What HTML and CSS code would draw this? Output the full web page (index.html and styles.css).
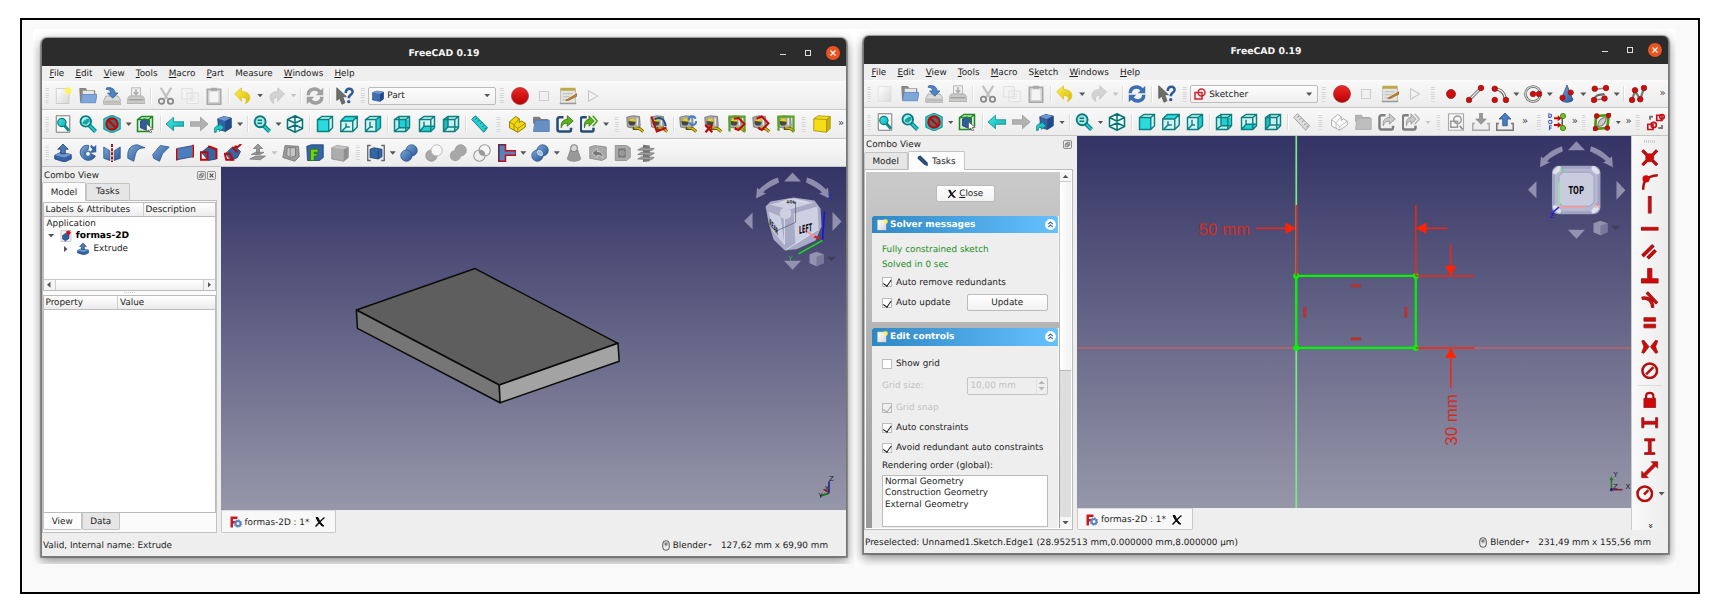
FILE: index.html
```html
<!DOCTYPE html>
<html lang="en">
<head>
<meta charset="utf-8">
<title>FreeCAD 0.19</title>
<link rel="stylesheet" href="styles.css">
</head>
<body>
<svg class="sprite" width="0" height="0">
<defs>
<linearGradient id="gb" x1="0" y1="0" x2="1" y2="1"><stop offset="0" stop-color="#7ba6d8"/><stop offset="1" stop-color="#2a5797"/></linearGradient>
<linearGradient id="gt" x1="0" y1="0" x2="1" y2="1"><stop offset="0" stop-color="#3ee8e8"/><stop offset="1" stop-color="#12b0b2"/></linearGradient>
<linearGradient id="gr" x1="0" y1="0" x2="0" y2="1"><stop offset="0" stop-color="#ef2929"/><stop offset="1" stop-color="#b80000"/></linearGradient>
<linearGradient id="gy" x1="0" y1="0" x2="1" y2="1"><stop offset="0" stop-color="#fdf04f"/><stop offset="1" stop-color="#d9b700"/></linearGradient>
<linearGradient id="gp" x1="0" y1="0" x2="1" y2="1"><stop offset="0" stop-color="#fff"/><stop offset="1" stop-color="#d8d8d8"/></linearGradient>
<radialGradient id="glow"><stop offset="0" stop-color="#fff94a"/><stop offset=".5" stop-color="#fff25a"/><stop offset="1" stop-color="#fff46b" stop-opacity="0"/></radialGradient>
</defs>
<symbol id="new" viewBox="0 0 24 24"><path d="M3 2h17v20H3z" fill="url(#gp)" stroke="#c4c4c4"/><circle cx="19" cy="5" r="6" fill="url(#glow)"/></symbol>
<symbol id="newdis" viewBox="0 0 24 24"><path d="M3 2h17v20H3z" fill="url(#gp)" stroke="#ddd"/></symbol>
<symbol id="open" viewBox="0 0 24 24"><path d="M1 2h8l2 3h10v5H4v9H2z" fill="#8b8b89" stroke="#6d6d6b"/><path d="M5 5h15v6H5z" fill="#e6e6e6"/><path d="M4 10h20l-2 11H2z" fill="#7ea7d9" stroke="#5583bf"/></symbol>
<symbol id="save" viewBox="0 0 24 24"><path d="M4 12h16l4 6v5H1v-5z" fill="#dcdcda" stroke="#9a9a98"/><path d="M2 18h21v4H2z" fill="#bcbcba"/><path d="M5 1c7-1 11 2 11 7h4l-7 7-7-7h4c0-3-2-5-6-5z" fill="#4f83c4" stroke="#2c5c9a"/></symbol>
<symbol id="print" viewBox="0 0 24 24"><path d="M6 1h12v11H6z" fill="#eee" stroke="#aaa"/><path d="M12 3v7m-3-3l3 3 3-3" stroke="#aaa" stroke-width="2" fill="none"/><path d="M3 12h18l3 5v5H0v-5z" fill="#c9c9c8" stroke="#a8a8a7"/><path d="M2 17h20" stroke="#a2a2a2" stroke-width="2"/></symbol>
<symbol id="cut" viewBox="0 0 24 24"><path d="M5 1l9 15M19 1l-9 15" stroke="#c0c0c0" stroke-width="3"/><circle cx="6" cy="19" r="3.600" fill="none" stroke="#8a8a8a" stroke-width="2.400"/><circle cx="18" cy="19" r="3.600" fill="none" stroke="#8a8a8a" stroke-width="2.400"/></symbol>
<symbol id="copy" viewBox="0 0 24 24"><path d="M1 2h14v14H1zM8 8h15v14H8z" fill="#f3f3f3" stroke="#dadada"/><path d="M11 12h9M11 15h9M11 18h7" stroke="#ddd"/></symbol>
<symbol id="paste" viewBox="0 0 24 24"><path d="M3 3h18v20H3z" fill="#d0d0cf" stroke="#a8a8a7" stroke-width="2"/><path d="M6 6h12v14H6z" fill="#f4f4f4"/><path d="M8 1h8v4H8z" fill="#a9a9a8"/></symbol>
<symbol id="undo" viewBox="0 0 24 24"><path d="M1 9l9-8v5c9 0 12 5 11 10-1 3-3 5-6 6 3-5 1-8-5-8v5z" fill="url(#gy)" stroke="#e0c22a"/></symbol>
<symbol id="redo" viewBox="0 0 24 24"><path d="M22 9l-9-8v5C4 6 2 11 3 16c1 3 3 5 5 6-2-5 0-8 5-8v5z" fill="#d2d2d2" stroke="#c4c4c4"/></symbol>
<symbol id="refresh" viewBox="0 0 24 24"><path d="M3 11C3 2 14 0 19 7M21 13c0 9-11 11-16 4" fill="none" stroke="#3e6fb0" stroke-width="4.600"/><path d="M23 1v10H13zM1 23V13h10z" fill="#3e6fb0"/></symbol>
<symbol id="whats" viewBox="0 0 24 24"><path d="M1 1l13 12H9l3 8-4 2-3-8-4 3z" fill="#6a6d68" stroke="#555753"/><path d="M13 8c0-8 10-7 9-1-1 4-5 3-5 8" fill="none" stroke="#2f5a94" stroke-width="3.400"/><circle cx="17" cy="19.500" r="2.200" fill="#2f5a94"/></symbol>
<symbol id="rec" viewBox="0 0 24 24"><circle cx="12" cy="12" r="11.300" fill="url(#gr)" stroke="#9a3030"/></symbol>
<symbol id="stop" viewBox="0 0 24 24"><path d="M6 6h12v12H6z" fill="#f1f1f1" stroke="#cfcfcf" stroke-width="1.500"/></symbol>
<symbol id="edit" viewBox="0 0 24 24"><path d="M2 3h20v19H2z" fill="#e4e4df" stroke="#b5b5ad"/><path d="M2 1h20v4H2z" fill="#bba94a"/><path d="M5 9h13M5 13h9M5 17h10" stroke="#bbb" stroke-width="1.500"/><path d="M24 9l-12 7-3 2 4-.5L24 12z" fill="#e08a1e" stroke="#8a5a22"/><path d="M1 22h22" stroke="#999" stroke-width="2"/></symbol>
<symbol id="play" viewBox="0 0 24 24"><path d="M6 5l12 7-12 7z" fill="#f3f3f3" stroke="#c9c9c9" stroke-width="1.500"/></symbol>
<symbol id="fit" viewBox="0 0 24 24"><path d="M3 1h18v22H3z" fill="#fafafa" stroke="#777" stroke-width="1.300"/><path d="M13 13l7 8" stroke="#0d8c8e" stroke-width="4"/><circle cx="10.500" cy="10" r="5.500" fill="url(#gt)" stroke="#067c7e" stroke-width="1.600"/></symbol>
<symbol id="fitsel" viewBox="0 0 24 24"><path d="M13 13l9 9" stroke="#067c7e" stroke-width="5.500"/><path d="M13 13l9 9" stroke="#1fc6c8" stroke-width="3"/><circle cx="9" cy="8.500" r="7" fill="#b0eeee" stroke="#067c7e" stroke-width="2.500"/><path d="M5 12V9l5-4h4v4l-4 4z" fill="#15a6a8"/></symbol>
<symbol id="dstyle" viewBox="0 0 24 24"><path d="M12 0l11 5v14l-11 5L1 19V5z" fill="#1dc9cb" stroke="#07797b"/><circle cx="12" cy="12" r="7.500" fill="#58676a" stroke="#c00808" stroke-width="3"/><path d="M7 7l10 10" stroke="#c00808" stroke-width="3"/></symbol>
<symbol id="bbox" viewBox="0 0 24 24"><path d="M2 6l6-4h14v15l-5 5H2z" fill="#dfe8df"/><path d="M6 8l5-3 7 2v9l-5 4-7-3z" fill="#315c9b" stroke="#173766"/><path d="M2 6l6-4h14v15l-5 5H2zM2 6h15v16M17 6l5-4" fill="none" stroke="#1b8a1f" stroke-width="2"/><path d="M14 12l9 7-4 .4 2 3.600-2 1-2-4-3 2z" fill="#fff" stroke="#555"/></symbol>
<symbol id="left" viewBox="0 0 24 24"><path d="M0 12l10-9v6h14v6H10v6z" fill="url(#gt)" stroke="#0b8284"/></symbol>
<symbol id="right" viewBox="0 0 24 24"><path d="M24 12L14 3v6H0v6h14v6z" fill="#b2b2b2" stroke="#9b9b9b"/></symbol>
<symbol id="link" viewBox="0 0 24 24"><path d="M5 5l8-3 10 2v13l-8 5-9-3z" fill="#3363a6" stroke="#183a6c"/><path d="M5 5l8-3 10 2-8 4z" fill="#6e98cf"/><path d="M15 8l8-4v13l-8 5z" fill="#214a86"/><path d="M0 23c0-6 2-9 7-9v-3l6 6-6 5v-3c-3 0-4 1-4 4z" fill="#23c5c7" stroke="#067c7e"/></symbol>
<symbol id="zoom" viewBox="0 0 24 24"><path d="M14 14l8 8" stroke="#067c7e" stroke-width="5.500"/><path d="M14 14l8 8" stroke="#1fc6c8" stroke-width="3"/><circle cx="9.500" cy="9" r="7.300" fill="#a8e6e6" stroke="#067c7e" stroke-width="2.500"/><path d="M6 7h6M6 11h6" stroke="#067c7e" stroke-width="1.800"/></symbol>
<symbol id="axo" viewBox="0 0 24 24"><path d="M12 1l10 5v12l-10 5-10-5V6zM2 6l10 5 10-5M12 11v12M12 1v10M2 18l10-5 10 5" fill="#e8fafa" stroke="#087173" stroke-width="2"/></symbol>
<symbol id="front" viewBox="0 0 24 24"><path d="M2 6l6-4h14v15l-5 5H2z" fill="#d4f4f4"/><path d="M2 6h15v16H2z" fill="#29dbdd"/><path d="M2 6l6-4h14v15l-5 5H2zM2 6h15v16M17 6l5-4" fill="none" stroke="#0c7f81" stroke-width="1.900"/></symbol>
<symbol id="top" viewBox="0 0 24 24"><path d="M1 8l6-6h16v14l-6 6H1z" fill="#d4f4f4"/><path d="M1 8l6-6h16l-6 6z" fill="#29dbdd"/><path d="M1 8l6-6h16v14l-6 6H1zM1 8h16v14M17 8l6-6M8 11v5h5M8 16l-5 5" fill="none" stroke="#0c7f81" stroke-width="1.900"/></symbol>
<symbol id="rgt" viewBox="0 0 24 24"><path d="M2 6l6-4h14v15l-5 5H2z" fill="#d4f4f4"/><path d="M16 6l6-4v15l-6 5z" fill="#1fd0d2"/><path d="M2 6l6-4h14v15l-6 5H2zM2 6h14v16M16 6l6-4M8 9v7h4M8 16l-5 5" fill="none" stroke="#0c7f81" stroke-width="1.900"/></symbol>
<symbol id="rear" viewBox="0 0 24 24"><path d="M2 6l6-4h14v15l-5 5H2z" fill="#b9eeee"/><path d="M8 6h13v11H8z" fill="#1fd0d2"/><path d="M2 6l6-4h14v15l-5 5H2zM2 6h15v16M17 6l5-4M8 3v14h13M8 17l-5 4" fill="none" stroke="#0c7f81" stroke-width="1.900"/></symbol>
<symbol id="bottom" viewBox="0 0 24 24"><path d="M2 6l6-4h14v15l-5 5H2z" fill="#d4f4f4"/><path d="M3 22l5-7h14l-5 7z" fill="#1fd0d2"/><path d="M2 6l6-4h14v15l-5 5H2zM2 6h15v16M17 6l5-4M8 9v6h13M8 15l-5 6" fill="none" stroke="#0c7f81" stroke-width="1.900"/></symbol>
<symbol id="lft" viewBox="0 0 24 24"><path d="M2 6l6-4h14v15l-5 5H2z" fill="#c4f0f0"/><path d="M2 6l6-3v13l-6 6z" fill="#1fb9bb"/><path d="M2 6l6-4h14v15l-5 5H2zM2 6h15v16M17 6l5-4M8 3v13h13M8 16l-5 5" fill="none" stroke="#0c7f81" stroke-width="1.900"/></symbol>
<symbol id="ruler" viewBox="0 0 24 24"><path d="M6 1L1 6l16 17 5-6z" fill="#24cfd1" stroke="#0b8284" stroke-width="1.300"/><path d="M8 4L6 6m5 1L9 9m5 1l-2 2m5 2l-2 2m5 1l-2 2" stroke="#066" stroke-width="1.300"/></symbol>
<symbol id="part" viewBox="0 0 24 24"><path d="M2 9l8-7 5 3v5l3-2 5 3v5l-10 7-11-6z" fill="#f3d80e" stroke="#8f7d05" stroke-width="1.300"/><path d="M2 9l6 4 7-8M8 13v7M8 14l5 4 10-7M13 18v5" stroke="#8f7d05" fill="none"/></symbol>
<symbol id="group" viewBox="0 0 24 24"><path d="M2 3h8l2 3h9v5H2z" fill="#7f7f7e" stroke="#6a6a69"/><path d="M4 7h19v15H2z" fill="#668fc7" stroke="#5178ab"/></symbol>
<symbol id="mlink" viewBox="0 0 24 24"><path d="M10 3H5c-2 0-3 1-3 3v13c0 2 1 3 3 3h13c2 0 2-1 2-3v-2" fill="none" stroke="#294c77" stroke-width="3.400"/><path d="M7 17C6 9 10 6 15 6V1l8 7-8 7v-4c-4 0-6 1-8 6z" fill="#5cb31a" stroke="#2c6a07"/></symbol>
<symbol id="mlinks" viewBox="0 0 24 24"><path d="M9 3H4C2 3 1 4 1 6v13c0 2 1 3 3 3h12c2 0 2-1 2-3v-2" fill="none" stroke="#294c77" stroke-width="3.400"/><path d="M6 17C5 9 8 6 12 6V1l7 7-7 7v-4c-3 0-5 1-6 6z" fill="#5cb31a" stroke="#2c6a07"/><path d="M17 1l6 7-6 7" fill="none" stroke="#4a9a14" stroke-width="2"/></symbol>
<symbol id="tape" viewBox="0 0 24 24"><path d="M1 3l8-2 9 1 1 13-7 3-10-2z" fill="#a9aaa7" stroke="#696a68"/><circle cx="8" cy="9.500" r="4.600" fill="#454746"/><path d="M4 8c1-5 8-5 9 1z" fill="#e8d21c"/><path d="M15 4v10" stroke="#e6e6e6" stroke-width="2"/><path d="M9 18l9 0 5 4" stroke="#5a5412" stroke-width="4" fill="none"/><path d="M11 17l7 1 5 4" stroke="#d8b800" stroke-width="2.200" fill="none"/></symbol>
<symbol id="tapeang" viewBox="0 0 24 24"><use href="#tape"/><path d="M2 2l7 20 13-5" fill="none" stroke="#c00808" stroke-width="2.600"/><path d="M6 6c8-5 14 0 15 9" fill="none" stroke="#1b4a8c" stroke-width="2.400"/></symbol>
<symbol id="taperef" viewBox="0 0 24 24"><use href="#tape"/><path d="M13 7c0-6 7-7 9-2M23 8c0 6-7 7-9 2" fill="none" stroke="#4a80c2" stroke-width="2.800"/></symbol>
<symbol id="tapedel" viewBox="0 0 24 24"><use href="#tape"/><path d="M2 13l9 10M11 13L2 23" stroke="#c00808" stroke-width="3"/></symbol>
<symbol id="tapeall" viewBox="0 0 24 24"><use href="#tape"/><path d="M2 22V2h20v20" fill="none" stroke="#5aa321" stroke-width="3"/><path d="M8 5l6-1 8 8-8 8-5-2" fill="none" stroke="#c00808" stroke-width="2.600"/></symbol>
<symbol id="tape3d" viewBox="0 0 24 24"><use href="#tape"/><path d="M6 5l7-3 9 9-9 9-5-3" fill="none" stroke="#c00808" stroke-width="2.600"/></symbol>
<symbol id="tapedelta" viewBox="0 0 24 24"><use href="#tape"/><path d="M2 21V2h20v19" fill="none" stroke="#5aa321" stroke-width="3"/></symbol>
<symbol id="ybox" viewBox="0 0 24 24"><path d="M1 5l6-4 16 1v16l-5 5-17-2z" fill="#f5de17" stroke="#9b8704"/><path d="M18 6l5-4v16l-5 5z" fill="#c9ad05"/><path d="M1 5l17 1v17M18 6l5-4" fill="none" stroke="#9b8704"/></symbol>
<symbol id="extrude" viewBox="0 0 24 24"><path d="M1 15l8-4 14 3v6l-9 4-13-4z" fill="#3363a6" stroke="#183a6c"/><path d="M1 15l8-4 14 3-9 4z" fill="#7099cf"/><path d="M12 0l7 7h-4v6H9V7H5z" fill="#4878b8" stroke="#183a6c"/></symbol>
<symbol id="revolve" viewBox="0 0 24 24"><path d="M13 2C5 0 0 8 2 14c3 9 15 11 20 2l-6-3c-2 4-7 4-8 0-1-3 1-5 4-5z" fill="url(#gb)" stroke="#2a4f82"/><path d="M15 4l3 3-4 5 9-1V1l-3 3-4-3z" fill="#3465a4"/><circle cx="12" cy="13" r="3.500" fill="#fff" stroke="#4a76b0" stroke-width="2"/></symbol>
<symbol id="mirror" viewBox="0 0 24 24"><path d="M1 4l8 5v13l-8-3zM23 4l-8 5v13l8-3z" fill="url(#gb)" stroke="#2a4f82"/><path d="M12 0v24" stroke="#b01010" stroke-width="2.600" stroke-dasharray="4 1.500"/></symbol>
<symbol id="fillet" viewBox="0 0 24 24"><path d="M1 15C1 6 6 1 14 1l10 4c-8 0-12 4-13 10l-2 8-8-4z" fill="url(#gb)" stroke="#2a4f82"/></symbol>
<symbol id="chamfer" viewBox="0 0 24 24"><path d="M1 14L11 2l12 2-9 9-4 10-8-4z" fill="url(#gb)" stroke="#2a4f82"/></symbol>
<symbol id="face" viewBox="0 0 24 24"><path d="M2 6l20-4v15L2 21z" fill="#4a7dc0"/><path d="M1 6v16M23 1v17" stroke="#c00808" stroke-width="2.400"/><path d="M1 6l22-4M1 21l22-4" stroke="#333a66"/></symbol>
<symbol id="loft" viewBox="0 0 24 24"><path d="M2 11l10-8 10 4v13l-11 2z" fill="#3465a4" stroke="#183a6c"/><path d="M1 11h9v10H1zM11 3l11 4v13" fill="none" stroke="#c00808" stroke-width="2.600"/></symbol>
<symbol id="sweep" viewBox="0 0 24 24"><path d="M2 13l8-8 6-1 6 6-4 8-8 4z" fill="#3465a4" stroke="#183a6c"/><path d="M1 13h7l4 8H3zM11 4l7 7M17 5l6-5M14 3l4 1" fill="none" stroke="#c00808" stroke-width="2.600"/></symbol>
<symbol id="offset" viewBox="0 0 24 24"><path d="M1 20l8-4h13l-7 5zM3 14l6-3h11l-5 3z" fill="#999" stroke="#777"/><path d="M12 0l6 6h-4v6h-4V6H6z" fill="#999" stroke="#777"/></symbol>
<symbol id="thick" viewBox="0 0 24 24"><path d="M4 2l18 1 1 14-6 6L1 18z" fill="#9c9c9c" stroke="#6f6f6f"/><path d="M7 5h11v11l-7 2-5-3z" fill="#c5c5c5" stroke="#6f6f6f"/><path d="M11 5v13" stroke="#777"/></symbol>
<symbol id="projf" viewBox="0 0 24 24"><path d="M1 3l6-2h16v17l-5 4H2z" fill="#3465a4" stroke="#183a6c"/><path d="M6 22V7h10v4h-5v2h4v3h-4v6z" fill="#73d216" stroke="#2f7205"/></symbol>
<symbol id="gbox" viewBox="0 0 24 24"><path d="M1 5l7-3 15 2v14l-6 5-16-3z" fill="#acacac" stroke="#8a8a8a"/><path d="M17 7l6-3v14l-6 5z" fill="#8f8f8f"/><path d="M1 5l16 2 6-3-15-2z" fill="#c2c2c2"/></symbol>
<symbol id="comp" viewBox="0 0 24 24"><path d="M5 2H1v20h4M19 2h4v20h-4" fill="none" stroke="#666" stroke-width="1.800"/><path d="M4 7l5-2 11 2v10l-5 3-11-2z" fill="#3465a4" stroke="#183a6c"/><path d="M15 9v11" stroke="#183a6c"/></symbol>
<symbol id="bool" viewBox="0 0 24 24"><circle cx="15.500" cy="8.500" r="7.500" fill="url(#gb)" stroke="#274d80"/><circle cx="8.500" cy="15.500" r="7.500" fill="url(#gb)" stroke="#274d80"/></symbol>
<symbol id="bcut" viewBox="0 0 24 24"><circle cx="8.500" cy="15.500" r="7.500" fill="#a8a8a8" stroke="#8c8c8c"/><circle cx="15.500" cy="8.500" r="7.500" fill="#f6f6f6" stroke="#aaa"/></symbol>
<symbol id="bfuse" viewBox="0 0 24 24"><circle cx="15.500" cy="8.500" r="7.500" fill="#a8a8a8" stroke="#8c8c8c"/><circle cx="8.500" cy="15.500" r="7.500" fill="#a8a8a8"/></symbol>
<symbol id="bcom" viewBox="0 0 24 24"><circle cx="15.500" cy="8.500" r="7.500" fill="#f6f6f6" stroke="#999" stroke-width="1.500"/><circle cx="8.500" cy="15.500" r="7.500" fill="#ececec" fill-opacity=".6" stroke="#999" stroke-width="1.500"/><path d="M8 9c4-2 8 2 8 6-5 2-9-2-8-6z" fill="#999"/></symbol>
<symbol id="join" viewBox="0 0 24 24"><path d="M1 1h9v8h14v6H10v8H1z" fill="#5682bd" stroke="#c40c14" stroke-width="2"/><path d="M1 1v22M1 1h9" stroke="#29446b" stroke-width="1.500"/></symbol>
<symbol id="split" viewBox="0 0 24 24"><circle cx="15.500" cy="8.500" r="7.500" fill="url(#gb)" stroke="#274d80"/><circle cx="8.500" cy="15.500" r="7.500" fill="url(#gb)" stroke="#274d80"/><path d="M9 9c5-1 7 2 6 6-5 1-7-2-6-6z" fill="#9dbce2" stroke="#fff"/></symbol>
<symbol id="check" viewBox="0 0 24 24"><path d="M7 8h10l4 12c-3 4-15 4-18 0z" fill="#999" stroke="#868686"/><circle cx="12" cy="5.500" r="4.500" fill="#d8d8d8" stroke="#888" stroke-width="1.500"/></symbol>
<symbol id="defeat" viewBox="0 0 24 24"><path d="M1 4l7-2 15 2v15l-6 3-16-3z" fill="#a8a8a8" stroke="#848484"/><path d="M4 12l7-6v4c7 0 8 5 7 9-1-3-3-4-7-4v3z" fill="#777" stroke="#ddd"/></symbol>
<symbol id="section" viewBox="0 0 24 24"><path d="M3 2h15l5 3v13l-5 4H3z" fill="#aaa" stroke="#888"/><path d="M7 6h10v12H7z" fill="#777"/><circle cx="12" cy="12" r="4" fill="#999"/></symbol>
<symbol id="cross" viewBox="0 0 24 24"><path d="M8 1l9 1v21l-9 1z" fill="#777"/><path d="M1 8l5-3 17 1-4 3zM1 14l5-3 17 1-4 3zM1 20l5-3 17 1-4 3z" fill="#a0a0a0" stroke="#777"/></symbol>
<symbol id="pcube" viewBox="0 0 24 24"><path d="M1 5l8-3 14 2v14l-7 5-15-3z" fill="#3e6eb0" stroke="#1d4176"/><path d="M16 8l7-4v14l-7 5z" fill="#204a87"/><path d="M1 5l8-3 14 2-7 4z" fill="#7099cf"/></symbol>
<symbol id="sk" viewBox="0 0 24 24"><path d="M2 9h14v13H2z" fill="none" stroke="#d3222a" stroke-width="3"/><circle cx="15" cy="9" r="7" fill="none" stroke="#d3222a" stroke-width="3"/></symbol>
<symbol id="pt" viewBox="0 0 24 24"><circle cx="12" cy="12" r="6" fill="#d40a0a" stroke="#6d2020"/></symbol>
<symbol id="line" viewBox="0 0 24 24"><path d="M4 20L20 4" stroke="#555" stroke-width="4"/><path d="M4 20L20 4" stroke="#eee" stroke-width="1.800"/><g fill="#d40a0a" stroke="#8d1515"><circle cx="4" cy="20" r="3.700"/><circle cx="20" cy="4" r="3.700"/></g></symbol>
<symbol id="arc" viewBox="0 0 24 24"><path d="M4 5c9 0 15 6 15 15" stroke="#555" stroke-width="4" fill="none"/><path d="M4 5c9 0 15 6 15 15" stroke="#eee" stroke-width="1.800" fill="none"/><g fill="#d40a0a" stroke="#8d1515"><circle cx="5" cy="5" r="3.700"/><circle cx="5" cy="20" r="3.700"/><circle cx="20" cy="20" r="3.700"/></g></symbol>
<symbol id="circ" viewBox="0 0 24 24"><circle cx="12" cy="12" r="10" fill="#f5f5f5" stroke="#666" stroke-width="3.500"/><circle cx="12" cy="12" r="10" fill="none" stroke="#ddd" stroke-width="1.500"/><g fill="#d40a0a" stroke="#8d1515"><circle cx="12" cy="12" r="3.700"/><circle cx="20" cy="12" r="3.700"/></g></symbol>
<symbol id="cone" viewBox="0 0 24 24"><path d="M12 0l8 20c-3 4-13 4-16 0z" fill="url(#gb)" stroke="#274d80"/><g fill="#d40a0a" stroke="#8d1515"><circle cx="6" cy="17" r="3.500"/><circle cx="17" cy="10" r="3.500"/></g></symbol>
<symbol id="bsp" viewBox="0 0 24 24"><path d="M4 20c3-9 8-6 14-8" stroke="#666" stroke-width="3" fill="none"/><path d="M5 6l14-2M5 20l15-2" stroke="#888" stroke-width="2"/><g fill="#d40a0a" stroke="#8d1515"><circle cx="5" cy="5" r="3.700"/><circle cx="4" cy="20" r="3.700"/><circle cx="20" cy="4" r="3.700"/><circle cx="18" cy="18" r="3.700"/></g></symbol>
<symbol id="poly" viewBox="0 0 24 24"><path d="M4 20L8 8l7 11 5-15" stroke="#777" stroke-width="3" fill="none"/><g fill="#d40a0a" stroke="#8d1515"><circle cx="4" cy="20" r="3.700"/><circle cx="8" cy="7" r="3.700"/><circle cx="15" cy="19" r="3.700"/><circle cx="20" cy="4" r="3.700"/></g></symbol>
<symbol id="skg" viewBox="0 0 24 24"><path d="M2 1h20v22H2z" fill="#f5f5f5" stroke="#aaa" stroke-width="1.500"/><path d="M5 11h9v8H5z" fill="none" stroke="#999" stroke-width="2"/><circle cx="14" cy="9" r="5" fill="none" stroke="#999" stroke-width="2"/><path d="M17 17l4 5" stroke="#888" stroke-width="2"/></symbol>
<symbol id="down" viewBox="0 0 24 24"><path d="M4 14H1v9h22v-9h-3" fill="#eee" stroke="#aaa" stroke-width="2"/><path d="M12 15L5 8h5V0h4v8h5z" fill="#9a9a9a" stroke="#888"/></symbol>
<symbol id="up" viewBox="0 0 24 24"><path d="M4 14H1v9h22v-9h-3" fill="#eee" stroke="#777" stroke-width="2"/><path d="M12 0l8 8h-5v9H9V8H4z" fill="#4a7ec4" stroke="#24497e"/></symbol>
<symbol id="dof" viewBox="0 0 24 24"><g fill="none" stroke="#3b4fc4" stroke-width="1.400"><path d="M1 1v5c5 0 5-5 0-5"/><circle cx="3" cy="12" r="2.300"/><path d="M2 23v-6h3M2 20h3"/></g><path d="M19 5v14" stroke="#555" stroke-width="2"/><path d="M8 7h7M8 16h7" stroke="#c00" stroke-width="2.600"/><path d="M13 3l5 4-5 4zM13 12l5 4-5 4z" fill="#c00"/><circle cx="20" cy="4" r="3.500" fill="#6fc61a" stroke="#347309"/><circle cx="20" cy="20" r="3.500" fill="#6fc61a" stroke="#347309"/></symbol>
<symbol id="spline" viewBox="0 0 24 24"><path d="M4 4l17-1-2 17-16 1z" fill="#ededed" stroke="#4e9a06" stroke-width="3.600"/><path d="M6 18c1-9 5-12 12-12-1 8-5 12-12 12z" fill="#ccc" stroke="#777" stroke-width="1.500"/><g fill="#d40a0a" stroke="#8d1515"><circle cx="5" cy="4" r="3.200"/><circle cx="21" cy="3" r="3.200"/><circle cx="3" cy="21" r="3.200"/><circle cx="19" cy="20" r="3.200"/></g></symbol>
<symbol id="virt" viewBox="0 0 24 24"><g fill="none" stroke="#cc1018" stroke-width="2.200"><path d="M1 15h7v7H1zM13 3h7v7h-7z"/><circle cx="9" cy="16" r="3.500"/><circle cx="20" cy="5" r="3"/></g><path d="M4 9V5h4M20 16v4h-5" fill="none" stroke="#777" stroke-width="2.500"/></symbol>
<symbol id="c1" viewBox="0 0 24 24"><path d="M2 2l6 6M22 2l-6 6M2 22l6-6M22 22l-6-6" stroke="#8a1616" stroke-width="4.500"/><path d="M2 2l6 6M22 2l-6 6M2 22l6-6M22 22l-6-6" stroke="#cf0808" stroke-width="3"/><circle cx="12" cy="12" r="5.500" fill="#d40808" stroke="#8a1616"/></symbol>
<symbol id="c2" viewBox="0 0 24 24"><path d="M3 23C3 10 8 4 23 3" fill="none" stroke="#b00f0f" stroke-width="3.500"/><circle cx="7" cy="8" r="5" fill="#d40808"/></symbol>
<symbol id="c3" viewBox="0 0 24 24"><path d="M10 0h4v24h-4z" fill="#d00808" stroke="#8a1616"/></symbol>
<symbol id="c4" viewBox="0 0 24 24"><path d="M0 10h24v4H0z" fill="#d00808" stroke="#8a1616"/></symbol>
<symbol id="c5" viewBox="0 0 24 24"><path d="M2 18L17 3M9 21L20 10" stroke="#8a1616" stroke-width="5"/><path d="M3 17L16 4M10 20l9-9" stroke="#d00808" stroke-width="3.500"/></symbol>
<symbol id="c6" viewBox="0 0 24 24"><path d="M9 2h6v14h9v6H0v-6h9z" fill="#d00808" stroke="#8a1616"/></symbol>
<symbol id="c7" viewBox="0 0 24 24"><path d="M1 10c9-2 15 4 15 13M8 2l14 15" fill="none" stroke="#8a1616" stroke-width="4.500"/><path d="M1 10c9-2 15 4 15 13M8 2l14 15" fill="none" stroke="#cc1010" stroke-width="3"/></symbol>
<symbol id="c8" viewBox="0 0 24 24"><path d="M4 5h16v5H4zM4 14h16v5H4z" fill="#d00808" stroke="#8a1616"/></symbol>
<symbol id="c9" viewBox="0 0 24 24"><path d="M1 4l3-1 7 9-7 9-3-1 3-8zM23 4l-3-1-7 9 7 9 3-1-3-8z" fill="#d00808" stroke="#8a1616"/></symbol>
<symbol id="c10" viewBox="0 0 24 24"><circle cx="12" cy="12" r="10" fill="none" stroke="#b50e0e" stroke-width="3.500"/><path d="M7 17L17 7" stroke="#b50e0e" stroke-width="3.500"/></symbol>
<symbol id="c11" viewBox="0 0 24 24"><path d="M7 11V7c0-6 10-6 10 0v4" fill="none" stroke="#b50e0e" stroke-width="3"/><path d="M4 10h16v13H4z" fill="#cc0a0a" stroke="#8a1616"/></symbol>
<symbol id="c12" viewBox="0 0 24 24"><path d="M1 5h3v5h16V5h3v14h-3v-5H4v5H1z" fill="#d00808" stroke="#8a1616"/></symbol>
<symbol id="c13" viewBox="0 0 24 24"><path d="M5 1h14v3h-5v16h5v3H5v-3h5V4H5z" fill="#d00808" stroke="#8a1616"/></symbol>
<symbol id="c14" viewBox="0 0 24 24"><path d="M23 1v9l-3-3L7 20l3 3H1v-9l3 3L17 4l-3-3z" fill="#d00808" stroke="#8a1616"/></symbol>
<symbol id="c15" viewBox="0 0 24 24"><circle cx="12" cy="12" r="10" fill="none" stroke="#b50e0e" stroke-width="3.500"/><path d="M11 13l6-6" stroke="#b50e0e" stroke-width="3.500"/></symbol>
<symbol id="pencil" viewBox="0 0 24 24"><path d="M2 3l5-2 14 14 1 7-7-2L1 7z" fill="#24466f"/><path d="M5 4l12 14" stroke="#547db0"/></symbol>
<symbol id="fc" viewBox="0 0 24 24"><path d="M1 1h14v5H6v4h6v5H6v8H1z" fill="#cb1820"/><circle cx="16" cy="15" r="5" fill="none" stroke="#5a82bd" stroke-width="4"/><circle cx="16" cy="15" r="7.500" fill="none" stroke="#5a82bd" stroke-width="2" stroke-dasharray="3 2.800"/></symbol>
<symbol id="x" viewBox="0 0 24 24"><path d="M3 21C8 17 13 9 21 3" stroke="#111" stroke-width="3" fill="none"/><path d="M4 3h4c3 8 7 13 12 17h-4C11 16 7 10 4 3z" fill="#111" stroke="#111" stroke-width="2"/></symbol>
<symbol id="doc" viewBox="0 0 24 24"><path d="M2 1h20v22H2z" fill="#f5f5f5" stroke="#999"/><path d="M5 11l7-5 6 4v7l-7 5-6-4z" fill="#2f5c9c" stroke="#173766"/><path d="M12 3l6-2 4 4-4 6-5-4z" fill="#cc1018"/></symbol>
<symbol id="float" viewBox="0 0 12 12"><rect x=".6" y=".6" width="10.800" height="10.800" rx="2" fill="#eee" stroke="#777" stroke-width="1.100"/><path d="M5 3h4v4H5zM3 5h4v4H3z" fill="none" stroke="#666"/></symbol>
<symbol id="close" viewBox="0 0 12 12"><rect x=".6" y=".6" width="10.800" height="10.800" rx="2" fill="#eee" stroke="#777" stroke-width="1.100"/><path d="M3.500 3.500l5 5m0-5l-5 5" stroke="#555" stroke-width="1.800"/></symbol>
<symbol id="mouse" viewBox="0 0 16 22"><rect x="1.500" y="1.500" width="13" height="19" rx="6" fill="none" stroke="#444" stroke-width="1.800"/><path d="M8 5v5" fill="none" stroke="#333" stroke-width="2.400"/><path d="M4 3c0 5 1 8 4 9 3-1 4-4 4-9" fill="none" stroke="#666" stroke-width="1.200"/></symbol>
<symbol id="dblup" viewBox="0 0 12 12"><circle cx="6" cy="6" r="5.900" fill="#fff"/><path d="M3.500 5.700L6 3.300l2.500 2.400M3.500 8.800L6 6.400l2.500 2.400" fill="none" stroke="#2a6a9d" stroke-width="1.100"/></symbol>
<symbol id="navarrows" viewBox="0 0 98 98"><g fill="#a9aac4" fill-opacity=".75"><path d="M40 9h17L48.500 0zM0 48.500L8.500 40v17zM88.500 39.500v19l9-9.500zM40 88.500h17l-8.500 9z"/><path d="M34 5l1 5C28 13 22 17 19 20l3 1-10 5 1-11 2 2C21 11 27 7 34 5zM63 5l-1 5c7 3 13 7 16 10l-3 1 10 5-1-11-2 2C76 11 70 7 63 5z"/><path d="M65.500 82l7-2.500 7 2.500v9l-7 3-7-3z"/></g><path d="M72.500 84.500l7-2.500v9l-7 3z" fill="#77789a"/><path d="M83 84.500h9l-4.500 4.500z" fill="#3f3f55"/></symbol>
</svg>

<main class="frame">
<div class="shot shot-a">
<section class="win win-a">
  <header class="title"><span class="name">FreeCAD 0.19</span><span class="wb"><i class="min"></i><i class="max"></i><svg class="wclose" viewBox="0 0 14 14"><circle cx="7" cy="7" r="7" fill="#e95420"/><path d="M4.500 4.500l5 5m0-5l-5 5" stroke="#fff" stroke-width="1.100"/></svg></span></header>
  <nav class="menu"><span><u>F</u>ile</span><span><u>E</u>dit</span><span><u>V</u>iew</span><span><u>T</u>ools</span><span><u>M</u>acro</span><span><u>P</u>art</span><span>Measure</span><span><u>W</u>indows</span><span><u>H</u>elp</span></nav>
  <div class="tb">
    <i class="h h0"></i><svg><use href="#new"/></svg><svg><use href="#open"/></svg><svg><use href="#save"/></svg><svg><use href="#print"/></svg><i class="s"></i><svg><use href="#cut"/></svg><svg><use href="#copy"/></svg><svg><use href="#paste"/></svg><i class="s"></i><svg><use href="#undo"/></svg><b class="a"></b><svg><use href="#redo"/></svg><b class="a off"></b><i class="s"></i><svg class="dis"><use href="#refresh"/></svg><i class="s"></i><svg><use href="#whats"/></svg><i class="h"></i><div class="combo"><svg><use href="#pcube"/></svg><span>Part</span><b class="a"></b></div><i class="h"></i><svg><use href="#rec"/></svg><svg><use href="#stop"/></svg><svg><use href="#edit"/></svg><svg><use href="#play"/></svg>
  </div>
  <div class="tb">
    <i class="h h0"></i><svg><use href="#fit"/></svg><svg><use href="#fitsel"/></svg><svg><use href="#dstyle"/></svg><b class="a"></b><svg><use href="#bbox"/></svg><i class="s"></i><svg><use href="#left"/></svg><svg><use href="#right"/></svg><svg><use href="#link"/></svg><b class="a"></b><i class="s"></i><svg><use href="#zoom"/></svg><b class="a"></b><svg><use href="#axo"/></svg><i class="s"></i><svg><use href="#front"/></svg><svg><use href="#top"/></svg><svg><use href="#rgt"/></svg><i class="s"></i><svg><use href="#rear"/></svg><svg><use href="#bottom"/></svg><svg><use href="#lft"/></svg><i class="s"></i><svg><use href="#ruler"/></svg><i class="h"></i><svg><use href="#part"/></svg><svg><use href="#group"/></svg><svg><use href="#mlink"/></svg><svg><use href="#mlinks"/></svg><b class="a"></b><i class="h"></i><svg><use href="#tape"/></svg><svg><use href="#tapeang"/></svg><i class="s"></i><svg><use href="#taperef"/></svg><svg><use href="#tapedel"/></svg><svg><use href="#tapeall"/></svg><svg><use href="#tape3d"/></svg><svg><use href="#tapedelta"/></svg><i class="h"></i><svg><use href="#ybox"/></svg><span class="more">»</span>
  </div>
  <div class="tb">
    <i class="h h0"></i><svg><use href="#extrude"/></svg><svg><use href="#revolve"/></svg><svg><use href="#mirror"/></svg><svg><use href="#fillet"/></svg><svg><use href="#chamfer"/></svg><svg><use href="#face"/></svg><svg><use href="#loft"/></svg><svg><use href="#sweep"/></svg><svg><use href="#offset"/></svg><b class="a off"></b><svg><use href="#thick"/></svg><svg><use href="#projf"/></svg><svg><use href="#gbox"/></svg><i class="h"></i><svg><use href="#comp"/></svg><b class="a"></b><svg><use href="#bool"/></svg><svg><use href="#bcut"/></svg><svg><use href="#bfuse"/></svg><svg><use href="#bcom"/></svg><svg><use href="#join"/></svg><b class="a"></b><svg><use href="#split"/></svg><b class="a"></b><svg><use href="#check"/></svg><svg><use href="#defeat"/></svg><svg><use href="#section"/></svg><svg><use href="#cross"/></svg>
  </div>
  <div class="main">
    <aside class="dock">
      <div class="dtitle"><span>Combo View</span><svg><use href="#float"/></svg><svg><use href="#close"/></svg></div>
      <div class="tabs"><span class="tab on w44">Model</span><span class="tab w43">Tasks</span></div>
      <div class="page">
        <div class="tree">
          <div class="th"><span class="c1">Labels &amp; Attributes</span><span>Description</span></div>
          <div class="tr r1">Application</div>
          <div class="tr r2"><b class="a"></b><svg><use href="#doc"/></svg><strong>formas-2D</strong></div>
          <div class="tr r3"><b class="ar"></b><svg><use href="#extrude"/></svg><span>Extrude</span></div>
          <div class="hscroll"><b class="al"></b><i></i><b class="ar"></b></div>
        </div>
        <div class="split"></div>
        <div class="props"><div class="th"><span class="c2">Property</span><span>Value</span></div></div>
        <div class="btabs"><span class="btab on">View</span><span class="btab">Data</span></div>
      </div>
    </aside>
    <div class="center">
      <svg class="view" viewBox="221 167.700 626 343">
        <g stroke="#0c0c0c" stroke-width="1.500" stroke-linejoin="round"><path d="M475.300 269.200L618.300 344l-118.800 41.700-143-75z" fill="#5e5e5e"/><path d="M356.500 310.700l143 75 .8 17.800L357.500 329z" fill="#767676"/><path d="M499.500 385.700L618.300 344l1.200 18-119.200 41.500z" fill="#a3a3a3"/></g>
        <use href="#navarrows" x="744.500" y="173" width="98" height="98"/>
        <path d="M766 207l5-5 23-4 21 3 6 8 1 18-6 14-19 9-12 1-11-11-5-17z" fill="#a7abc6"/>
        <path d="M770 205l25-6 19 4-24 7zM769 212l12 5 4 29-12-15zM794 214l24-7 1 23-23 15z" fill="#cdd0e2"/>
        <path d="M781 203l8-3 19 3M785 214v31M786 251l10-7 23-14" fill="none" stroke="#e1e3ef" stroke-width=".8"/>
        <circle cx="786" cy="214" r="5.800" fill="#ced1e2"/>
        <path d="M796 202v21l-20 9" stroke="#555a7a" stroke-width=".7" fill="none"/>
        <path d="M802 229l13 8" stroke="#ff8a92" stroke-width="1.600"/><path d="M814 238l2-2 7 4.500z" fill="#f01414"/>
        <path d="M825 212l-2 29" stroke="#1212ee" stroke-width="1.500"/><path d="M799 254.500l24-13.500" stroke="#12e412" stroke-width="1.500"/>
        <text class="cube" transform="matrix(1 -.22 0 1 799.500 234.500)" font-size="11" textLength="13" lengthAdjust="spacingAndGlyphs">LEFT</text><text class="cube" transform="matrix(.7 .95 0 1 770 225)" font-size="9" textLength="12" lengthAdjust="spacingAndGlyphs">REAR</text><text class="cube" transform="matrix(1 .1 0 -.5 787 200.500)" font-size="8" textLength="9" lengthAdjust="spacingAndGlyphs">TOP</text>
        <text class="ax" x="828" y="200" fill="#2323dd">Z</text><text class="ax" x="789" y="261.500" fill="#12cc22">Y</text>
        <path d="M829.500 494v-12" stroke="#23238f" stroke-width="1.600"/><path d="M829.500 494l-9 3" stroke="#1c6b1c" stroke-width="2"/><path d="M829 493l-5-3" stroke="#8d1c24" stroke-width="1.600"/>
        <text class="axd" x="829.500" y="482">Z</text><text class="axd" x="819" y="499">Y</text><text class="axd" x="825" y="492">X</text>
      </svg>
      <div class="dtab"><svg><use href="#fc"/></svg><span>formas-2D : 1*</span><svg><use href="#x"/></svg></div>
    </div>
  </div>
  <footer class="status"><span class="msg">Valid, Internal name: Extrude</span><svg><use href="#mouse"/></svg><span>Blender</span><b class="a sm"></b><span class="dim">127,62 mm x 69,90 mm</span></footer>
</section>
</div>

<div class="shot shot-b">
<section class="win win-b">
  <header class="title"><span class="name">FreeCAD 0.19</span><span class="wb"><i class="min"></i><i class="max"></i><svg class="wclose" viewBox="0 0 14 14"><circle cx="7" cy="7" r="7" fill="#e95420"/><path d="M4.500 4.500l5 5m0-5l-5 5" stroke="#fff" stroke-width="1.100"/></svg></span></header>
  <nav class="menu"><span><u>F</u>ile</span><span><u>E</u>dit</span><span><u>V</u>iew</span><span><u>T</u>ools</span><span><u>M</u>acro</span><span>S<u>k</u>etch</span><span><u>W</u>indows</span><span><u>H</u>elp</span></nav>
  <div class="tb">
    <i class="h h0"></i><svg><use href="#newdis"/></svg><svg><use href="#open"/></svg><svg><use href="#save"/></svg><svg><use href="#print"/></svg><i class="s"></i><svg><use href="#cut"/></svg><svg><use href="#copy"/></svg><svg><use href="#paste"/></svg><i class="s"></i><svg><use href="#undo"/></svg><b class="a"></b><svg><use href="#redo"/></svg><b class="a off"></b><i class="s"></i><svg><use href="#refresh"/></svg><i class="s"></i><svg><use href="#whats"/></svg><i class="h"></i><div class="combo"><svg><use href="#sk"/></svg><span>Sketcher</span><b class="a"></b></div><i class="h"></i><svg><use href="#rec"/></svg><svg><use href="#stop"/></svg><svg><use href="#edit"/></svg><svg><use href="#play"/></svg><i class="h"></i><svg><use href="#pt"/></svg><svg><use href="#line"/></svg><svg><use href="#arc"/></svg><b class="a"></b><svg><use href="#circ"/></svg><b class="a"></b><svg><use href="#cone"/></svg><b class="a"></b><svg><use href="#bsp"/></svg><b class="a"></b><i class="s"></i><svg><use href="#poly"/></svg><span class="more m2">»</span>
  </div>
  <div class="tb">
    <i class="h h0"></i><svg><use href="#fit"/></svg><svg><use href="#fitsel"/></svg><svg><use href="#dstyle"/></svg><b class="a"></b><svg><use href="#bbox"/></svg><i class="s"></i><svg><use href="#left"/></svg><svg><use href="#right"/></svg><svg><use href="#link"/></svg><b class="a"></b><i class="s"></i><svg><use href="#zoom"/></svg><b class="a"></b><svg><use href="#axo"/></svg><i class="s"></i><svg><use href="#front"/></svg><svg><use href="#top"/></svg><svg><use href="#rgt"/></svg><i class="s"></i><svg><use href="#rear"/></svg><svg><use href="#bottom"/></svg><svg><use href="#lft"/></svg><i class="s"></i><svg class="dis"><use href="#ruler"/></svg><i class="h"></i><svg class="dis"><use href="#part"/></svg><svg class="dis"><use href="#group"/></svg><svg class="dis"><use href="#mlink"/></svg><svg class="dis"><use href="#mlinks"/></svg><b class="a off"></b><i class="h h2"></i><svg><use href="#skg"/></svg><svg><use href="#down"/></svg><svg><use href="#up"/></svg><span class="more m3">»</span><i class="h"></i><svg><use href="#dof"/></svg><span class="more m4">»</span><i class="h h2"></i><svg><use href="#spline"/></svg><b class="a"></b><span class="more m4">»</span><i class="h"></i><svg><use href="#virt"/></svg>
  </div>
  <div class="main">
    <aside class="dock">
      <div class="dtitle"><span>Combo View</span><svg><use href="#float"/></svg></div>
      <div class="tabs"><span class="tab w43">Model</span><span class="tab on w57"><svg><use href="#pencil"/></svg>Tasks</span></div>
      <div class="taskpage">
        <div class="scroll">
          <div class="btn closebtn"><svg><use href="#x"/></svg><span><u>C</u>lose</span></div>
          <div class="task t1">
            <div class="thead"><svg class="pg"><use href="#new"/></svg><span>Solver messages</span><svg class="up"><use href="#dblup"/></svg></div>
            <div class="row ok ra">Fully constrained sketch</div>
            <div class="row ok ra">Solved in 0 sec</div>
            <div class="row rb"><i class="cb on"></i>Auto remove redundants</div>
            <div class="row rb"><i class="cb on"></i>Auto update<span class="btn upd">Update</span></div>
          </div>
          <div class="task t2">
            <div class="thead"><svg class="pg"><use href="#new"/></svg><span>Edit controls</span><svg class="up"><use href="#dblup"/></svg></div>
            <div class="row rc"><i class="cb"></i>Show grid</div>
            <div class="row rd faded">Grid size:<span class="spin"><span>10,00 mm</span><i><b class="au"></b><b class="a"></b></i></span></div>
            <div class="row rc faded"><i class="cb on"></i>Grid snap</div>
            <div class="row re"><i class="cb on"></i>Auto constraints</div>
            <div class="row rc"><i class="cb on"></i>Avoid redundant auto constraints</div>
            <div class="row rf">Rendering order (global):</div>
            <div class="list"><div>Normal Geometry</div><div>Construction Geometry</div><div>External Geometry</div></div>
          </div>
        </div>
        <div class="vscroll"><div class="vb"><b class="au"></b></div><div class="thumb"></div><div class="vb bot"><b class="a"></b></div></div>
      </div>
    </aside>
    <div class="center">
      <svg class="view" viewBox="1077.300 136.800 553 371.500">
        <path d="M1296.300 136v373" stroke="#77ee83" stroke-width="1.700"/><path d="M1077 348.700h554" stroke="#c26069" stroke-width="1.500"/>
        <g stroke="#04f204" stroke-width="2.200" fill="none"><path d="M1296.300 276.700h119.600v72h-119.600z"/></g>
        <g fill="#04f204"><circle cx="1296.300" cy="276.700" r="3"/><circle cx="1415.900" cy="276.700" r="3"/><circle cx="1296.300" cy="348.700" r="3"/><circle cx="1415.900" cy="348.700" r="3"/></g>
        <g stroke="#ee2710" stroke-width="1.500"><path d="M1296.300 205.700v71M1415.900 205.700v71M1256 229h34M1422 229h25.500M1450.800 245.500V268M1450.800 356v32.500M1415.900 276.700h58.600M1415.900 348.700h58.600" fill="none"/></g>
        <path d="M1296 229l-10.500-5.700v11.400zM1416 229l10.500-5.700v11.400zM1450.800 276.700l-5.700-10.200h11.400zM1450.800 348.700l-5.700 10.200h11.400z" fill="#ff2400"/>
        <path d="M1351 285.300h10v2.400h-10zM1351 338.500h10v2.400h-10zM1303.600 308h2.400v10h-2.400zM1404.700 308h2.400v10h-2.400z" fill="#cc3020" stroke="#8a3a44" stroke-width=".5"/>
        <text class="dimt" x="1198.500" y="235.700">50 mm</text><text class="dimt" transform="translate(1457.500 446.500) rotate(-90)">30 mm</text>
        <use href="#navarrows" x="1528" y="142" width="98" height="98"/>
        <rect x="1552" y="166.500" width="48.500" height="48.500" rx="7" fill="#a0a4c0"/><rect x="1555" y="169.500" width="42.500" height="42.500" rx="6" fill="#b6b9d0"/><path d="M1563 173h27l4 4v26l-4 4h-27l-4-4v-26z" fill="#c9ccdf" stroke="#969bba" stroke-width=".8"/>
        <g fill="#dfe1ee"><ellipse cx="1557" cy="171" rx="5" ry="2.500" transform="rotate(-45 1557 171)"/><ellipse cx="1595.500" cy="171" rx="5" ry="2.500" transform="rotate(45 1595.500 171)"/><ellipse cx="1557" cy="210" rx="5" ry="2.500" transform="rotate(45 1557 210)"/><ellipse cx="1595.500" cy="210" rx="5" ry="2.500" transform="rotate(-45 1595.500 210)"/></g>
        <path d="M1559 207.500v-25" stroke="#8ef08e" stroke-width="1.500"/><path d="M1559 208h27" stroke="#ff9a9a" stroke-width="1.500"/><path d="M1559 208l-6 5" stroke="#2222ee" stroke-width="1.500"/>
        <text class="ax" x="1549.500" y="218.500" fill="#1111ee">Z</text><text class="ax" x="1560" y="174" fill="#58d868">Y</text><text class="ax" x="1595" y="209" fill="#ee7a85">X</text>
        <text class="cube" x="1568.500" y="195" font-size="11" textLength="15.500" lengthAdjust="spacingAndGlyphs">TOP</text>
        <path d="M1611.500 490v-11" stroke="#1c7b1c" stroke-width="1.400"/><path d="M1609.500 481l2-4 2 4z" fill="#1c7b1c"/><path d="M1611.500 490.500h11" stroke="#8d1c24" stroke-width="1.600"/><circle cx="1611.500" cy="490.500" r="1.600" fill="#2323a0"/>
        <text class="axd" x="1613.500" y="477.500">Y</text><text class="axd" x="1613" y="490">Z</text><text class="axd" x="1625.500" y="490">X</text>
      </svg>
      <div class="dtab"><svg><use href="#fc"/></svg><span>formas-2D : 1*</span><svg><use href="#x"/></svg></div>
    </div>
    <div class="vtb">
      <i class="vh"></i><svg><use href="#c1"/></svg><svg><use href="#c2"/></svg><svg><use href="#c3"/></svg><svg><use href="#c4"/></svg><svg><use href="#c5"/></svg><svg><use href="#c6"/></svg><svg><use href="#c7"/></svg><svg><use href="#c8"/></svg><svg><use href="#c9"/></svg><svg><use href="#c10"/></svg><i class="vs"></i><svg><use href="#c11"/></svg><svg><use href="#c12"/></svg><svg><use href="#c13"/></svg><svg><use href="#c14"/></svg><div class="last"><svg><use href="#c15"/></svg><b class="a"></b></div><span class="vmore">»</span>
    </div>
  </div>
  <footer class="status"><span class="msg">Preselected: Unnamed1.Sketch.Edge1 (28.952513 mm,0.000000 mm,8.000000 µm)</span><svg><use href="#mouse"/></svg><span>Blender</span><b class="a sm"></b><span class="dim">231,49 mm x 155,56 mm</span></footer>
</section>
</div>
</main>
</body>
</html>
```

FILE: styles.css
```css
* { box-sizing: border-box; }
body { margin: 0; background: #fff; width: 1720px; height: 616px; overflow: hidden; padding: 18.3px 20px 0; font: 8.83px/1.2 "DejaVu Sans", sans-serif; color: #1c1c1c; text-rendering: geometricPrecision; }
.sprite { position: absolute; }
svg { display: block; flex: none; }
i, b { display: block; flex: none; }
u { text-decoration: underline; text-underline-offset: 1.3px; text-decoration-thickness: .8px; }
span { white-space: nowrap; }

.frame { width: 1680px; height: 575.700px; border: 2px solid #000; background: #f9f9f9; display: flex; align-items: flex-start; padding: 8.700px 0 0 11px; }
.shot { background: #fff; overflow: hidden; flex: none; }
.shot-a { width: 822px; height: 535.500px; padding: 9.500px 0 0 8px; }
.shot-b { width: 821px; height: 537px; padding: 7px 0 0 8px; }
.win { display: flex; flex-direction: column; width: 806px; background: #eee; border-radius: 6px 6px 0 0; box-shadow: 0 4px 11px 1px rgba(0,0,0,.42), 0 0 1px 1px rgba(0,0,0,.35); border: solid #777; border-width: 0 .7px 1px; }
.win-a { height: 518.200px; }
.win-b { height: 518px; }

.title { height: 27.700px; background: #2c2c2c; border-radius: 5px 5px 0 0; display: flex; align-items: center; position: relative; color: #f4f4f4; flex: none; }
.name { flex: 1; text-align: center; font-weight: bold; font-size: 9.300px; padding-top: 3px; }
.win-b .title { height: 28.300px; }
.wb { position: absolute; right: 6px; top: 7.500px; display: flex; align-items: center; }
.min { width: 6px; height: 1px; background: #ddd; margin: 3px 19px 0 0; }
.max { width: 6px; height: 6px; border: 1px solid #ddd; margin-right: 15px; }
.wclose { width: 14px; height: 14px; }

.menu { height: 15px; display: flex; gap: 11.150px; padding: 3.300px 0 0 7.500px; flex: none; background: #efefef; }
.win-b .menu { height: 15.800px; padding-top: 4px; }
.tb { height: 28.700px; display: flex; align-items: center; background: linear-gradient(#f8f8f8, #ececec); border-top: 1px solid #fbfbfb; border-bottom: 1px solid #c6c6c6; flex: none; }
.win-b .tb { height: 28.200px; }
.tb > svg { width: 18px; height: 18px; margin: 0 3.150px; }
.s { width: 5px; height: 16px; background: linear-gradient(90deg, transparent 2px, #ddd 2px, #ddd 3px, #fff 3px, #fff 4px, transparent 4px); }
.h { width: 12px; height: 15px; background: repeating-linear-gradient(#ccc 0 1px, transparent 1px 2.300px); clip-path: inset(0 4px); opacity: .75; }
.h0 { width: 9.300px; clip-path: inset(0 2.500px 0 3.500px); }
.h2 { width: 11.500px; }
.a, .au, .al, .ar { width: 9.200px; height: 3.500px; background: #555; clip-path: polygon(1.600px 0, 7.600px 0, 4.600px 3.500px); }
.au { clip-path: polygon(1.600px 3.500px, 7.600px 3.500px, 4.600px 0); }
.al { width: 3.500px; height: 6px; clip-path: polygon(3.500px 0, 3.500px 6px, 0 3px); }
.ar { width: 3.500px; height: 6px; clip-path: polygon(0 0, 0 6px, 3.500px 3px); }
.a.off { background: #c4c4c4; }
.dis { filter: grayscale(1) brightness(1.25) opacity(.75); }
.combo { width: 127.500px; height: 18px; border: 1px solid #bcbcbc; border-radius: 2px; background: linear-gradient(#fdfdfd, #f0f0f0); display: flex; align-items: center; padding: 0 3px; margin: 0 0 0 -.5px; }
.combo svg { width: 12px; height: 12px; margin-right: 3px; }
.combo span { flex: 1; padding-top: 1.500px; }
.more { font-size: 10px; color: #333; margin-left: 4px; line-height: 10px; }
.m2 { margin-left: 9px; }
.m3 { width: 16px; margin-left: 5px; }
.m4 { width: 8.700px; margin-left: 2.700px; }

.main { flex: 1; min-height: 0; display: flex; }
.dock { width: 175px; flex: none; display: flex; flex-direction: column; }
.win-a .dock { margin-right: 3.500px; }
.win-b .dock { width: 209px; margin-right: 4px; }
.dtitle { display: flex; align-items: center; height: 14.800px; padding: 0 0 0 2px; }
.dtitle span { flex: 1; padding-top: 3px; }
.dtitle svg { width: 9px; height: 9px; margin: 1px 1.200px 0 0; }
.tabs { display: flex; align-items: flex-end; height: 19px; flex: none; border-bottom: 1px solid #bbb; }
.tab { height: 17.500px; border: 1px solid #c4c4c4; border-bottom: 0; border-radius: 2px 2px 0 0; background: #e6e6e6; display: flex; align-items: center; justify-content: center; padding-top: 2px; }
.tab.on { background: #fcfcfc; height: 19px; margin-bottom: -1px; }
.tab svg { width: 12px; height: 12px; margin: -2px 3px 0 0; }
.w44 { width: 44px; } .w43 { width: 43.500px; } .w57 { width: 57.500px; }
.page { flex: 1; background: #fbfbfb; border: 1px solid #c2c2c2; border-top: 0; display: flex; flex-direction: column; padding: 1px 0 0; }
.tree { height: 88.500px; border: 1px solid #bcbcbc; background: #fff; display: flex; flex-direction: column; flex: none; }
.th { height: 14px; display: flex; align-items: center; background: linear-gradient(#fff, #ececec); border-bottom: 1px solid #bbb; padding-left: 1.500px; flex: none; }
.th span { height: 13px; display: flex; align-items: center; padding-top: 2px; }
.c1, .c2 { width: 98px; border-right: 1px solid #ccc; margin-right: 2px; }
.c2 { width: 72.500px; }
.tr { display: flex; align-items: center; flex: none; }
.r1 { height: 12.300px; padding: 1.500px 0 0 2.500px; }
.r2 { height: 13px; padding-left: 2.500px; }
.r2 svg { width: 12px; height: 12px; margin: 0 4px 0 4px; }
.r2 strong { font-size: 9.100px; color: #000; padding-top: 1.500px; }
.r3 { height: 13.400px; padding-left: 20px; }
.r3 span { padding-top: 1px; }
.r3 svg { width: 12px; height: 12px; margin: 0 5px 0 9px; }
.hscroll { margin-top: auto; height: 10.500px; border-top: 1px solid #c8c8c8; display: flex; align-items: center; justify-content: space-between; padding: 0 4px 0 3px; background: #f4f4f4; }
.hscroll i { width: 149px; height: 10px; border: solid #ccc; border-width: 0 1px; background: linear-gradient(#fff, #f0f0f0); }
.split { height: 4.500px; width: 12px; margin: 0 auto; background: repeating-linear-gradient(90deg, #ccc 0 1px, transparent 1px 2px); background-size: 100% 1px; background-repeat: no-repeat; background-position: 0 1px; }
.props { flex: 1; border: 1px solid #bbb; background: #fff; }
.btabs { height: 18.800px; display: flex; flex: none; }
.btab { height: 17px; width: 38.500px; border: 1px solid #c4c4c4; border-top: 0; background: #e6e6e6; display: flex; align-items: center; justify-content: center; border-radius: 0 0 2px 2px; padding-top: 2px; }
.btab.on { background: #fdfdfd; height: 17.500px; }

.center { flex: 1; min-width: 0; display: flex; flex-direction: column; }
.view { width: 100%; background: linear-gradient(#333365, #9797aa); flex: none; }
.win-a .view { height: 343px; }
.win-b .view { height: 371.500px; }
.dtab { width: 115.500px; height: 22.500px; background: #f8f8f8; border: 1px solid #c8c8c8; border-top-color: #ddd; border-radius: 0 0 2px 2px; display: flex; align-items: center; padding: 2.500px 0 0 8px; }
.dtab svg { width: 12px; height: 12px; margin-top: -1px; }
.dtab span { margin: 1px 5px 0 3px; }
.cube { font-family: "DejaVu Sans", sans-serif; font-weight: bold; fill: #0b0b12; }
.ax, .axd { font-family: "DejaVu Sans", sans-serif; font-size: 7px; }
.axd { fill: #1c1c28; }
.dimt { font-family: "Liberation Sans", Arial, sans-serif; font-size: 16.900px; fill: #d42c1c; }

.status { height: 23px; display: flex; align-items: center; padding: 4px 18px 0 1px; flex: none; }
.win-b .status { padding-right: 17px; }
.msg { flex: 1; }
.status svg { width: 8px; height: 11px; margin: -2px 3px 0 0; }
.sm { width: 7px; height: 3px; margin: -2px 7px 0 0; clip-path: polygon(.8px 0, 5.200px 0, 3px 2.600px); }

.taskpage { flex: 1; min-height: 0; display: flex; border: 1px solid #bbb; border-top: 0; background: #fff; padding: 1.500px 1px 1px; }
.scroll { flex: 1; background: linear-gradient(#cacaca, #999); padding: 13.500px 0 0 6px; overflow: hidden; }
.btn { border: 1px solid #bbb; border-radius: 2px; background: linear-gradient(#fff, #f2f2f2); display: flex; align-items: center; justify-content: center; padding-top: 1.500px; }
.closebtn { width: 58.500px; height: 17px; margin-left: 64px; margin-bottom: 13.500px; }
.closebtn svg { width: 10px; height: 10px; margin: -1px 2px 0 0; }
.task { width: 187px; background: #eee; border-right: 1px solid #fafafa; }
.t1 { height: 106.300px; margin-bottom: 6px; }
.t2 { height: 200px; }
.thead { height: 17.500px; display: flex; align-items: center; background: linear-gradient(90deg, #2f88c4, #66c1ff); border-radius: 2px 2px 0 0; color: #fff; font-weight: bold; font-size: 9px; padding: 0 2px 0 4px; }
.t1 .thead { margin-bottom: 8px; }
.t2 .thead { margin-bottom: 7.500px; }
.thead span { flex: 1; padding-top: 2px; }
.pg { width: 12px; height: 12px; margin-right: 2px; }
.thead .up { width: 11px; height: 11px; }
.row { display: flex; align-items: center; padding: 2px 0 0 10px; }
.ok { color: #1d8f1d; }
.ra { height: 15.300px; } .rb { height: 20.500px; } .rc { height: 21px; } .rd { height: 23px; } .re { height: 19px; } .rf { height: 15px; }
.cb { width: 10px; height: 10px; border: 1px solid #bcbcbc; background: #fff; margin: -2px 4px 0 0; }
.cb.on::after { content: ""; display: block; width: 3.500px; height: 6.500px; margin: 0 0 0 2.300px; border: solid #111; border-width: 0 1.500px 1.500px 0; transform: rotate(35deg); }
.faded { color: #c2c2c2; }
.faded .cb { background: #eee; }
.faded .cb.on::after { border-color: #aaa; }
.upd, .spin { width: 81.500px; height: 17px; margin: -2px 10px 0 auto; }
.spin { border: 1px solid #c4c4c4; border-radius: 2px; display: flex; height: 18px; align-items: center; padding-left: 3px; justify-content: space-between; }
.spin span { padding-top: 2px; }
.spin i { width: 11px; height: 16px; border-left: 1px solid #ccc; display: flex; flex-direction: column; justify-content: space-evenly; opacity: .35; }
.list { margin: 2.200px 10px 0; border: 1px solid #bbb; background: #fff; height: 51.500px; padding: 1px 2px 0; line-height: 11.150px; }
.vscroll { width: 11px; display: flex; flex-direction: column; background: #dedede; }
.vb { height: 10.500px; background: #f6f6f6; display: flex; align-items: center; justify-content: center; border-bottom: 1px solid #ccc; }
.thumb { height: 188.500px; background: linear-gradient(90deg, #fff, #f2f2f2); border-bottom: 1px solid #bbb; }
.bot { margin-top: auto; border: 0; }

.vtb { width: 37.500px; flex: none; background: linear-gradient(90deg, #f9f9f9, #ececec); border-left: 1px solid #ccc; display: flex; flex-direction: column; align-items: center; }
.vtb svg { width: 17.500px; height: 17.500px; margin-bottom: 6.130px; }
.vh { width: 12px; height: 3px; margin: 3.500px 0 6px; background: repeating-linear-gradient(90deg, #ccc 0 1px, transparent 1px 2px); }
.vs { width: 24px; height: 1px; background: #ddd; margin: -.5px 0 4.800px; }
.last { display: flex; align-items: center; align-self: flex-start; margin-left: 4.500px; height: 17.500px; }
.last svg { margin: 0 3.500px 0 0; }
.vmore { transform: rotate(90deg); font-size: 9px; margin-top: 17px; line-height: 12px; }
```
